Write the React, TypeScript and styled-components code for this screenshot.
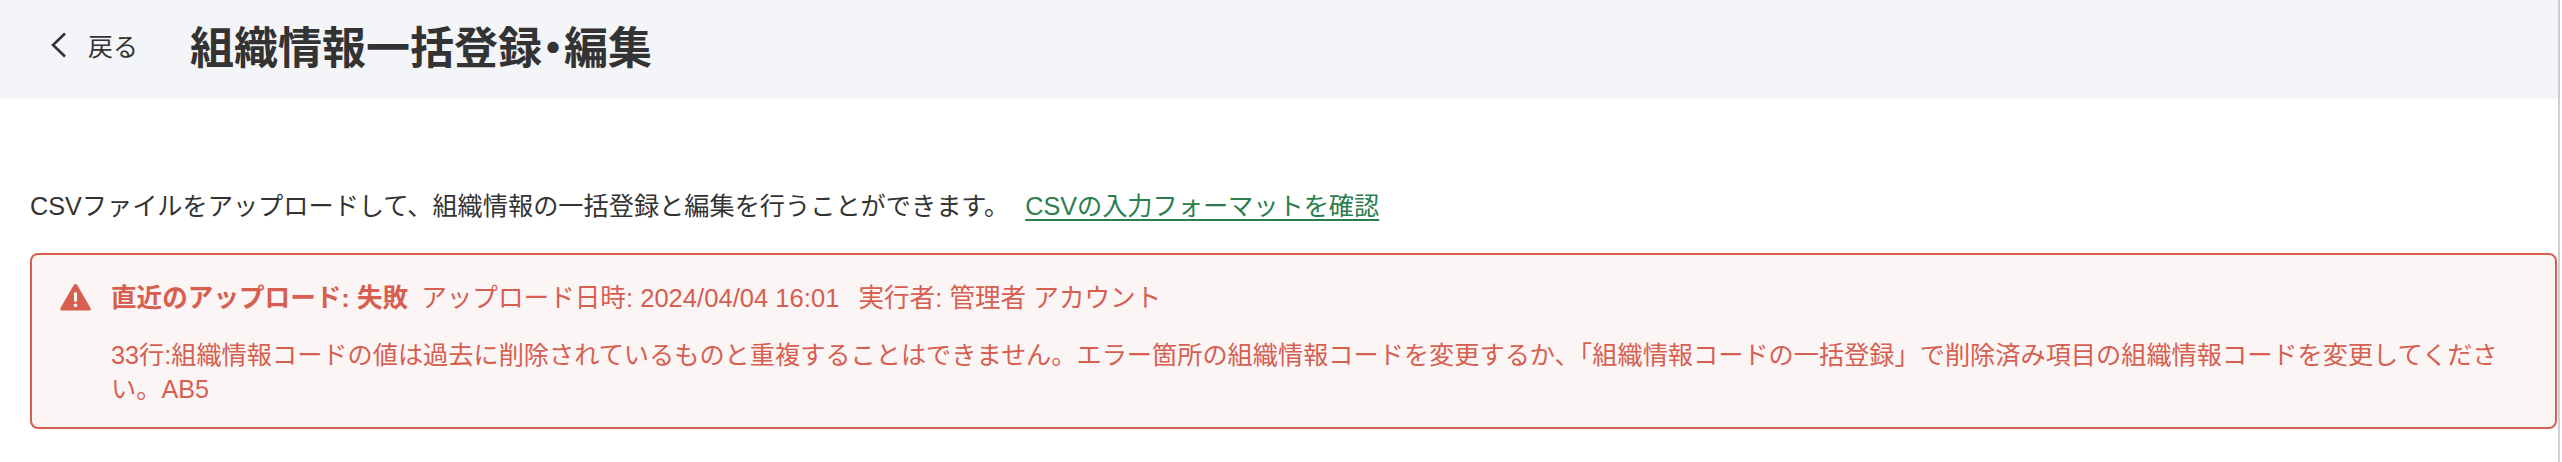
import React from "react";
import styled, { createGlobalStyle } from "styled-components";

const GlobalStyle = createGlobalStyle`
  html, body {
    margin: 0;
    padding: 0;
    background: #ffffff;
    overflow: hidden;
  }
  body {
    font-family: "Liberation Sans", "Noto Sans CJK JP", sans-serif;
    color: #333333;
  }
`;

export default function App() {
  return (
    <>
      <GlobalStyle />
      <Page>
        <Main>
          <Header>
            <BackLink href="#">
              <BackIcon viewBox="0 0 18 26" aria-hidden="true">
                <path d="M15 1.5 L3 13 L15 24.5" />
              </BackIcon>
              戻る
            </BackLink>
            <Title>組織情報一括登録・編集</Title>
          </Header>
          <Content>
            <Intro>
              <span>CSVファイルをアップロードして、組織情報の一括登録と編集を行うことができます。</span>
              <FormatLink href="#">CSVの入力フォーマットを確認</FormatLink>
            </Intro>
            <Alert>
              <AlertIcon viewBox="0 0 32 28" aria-hidden="true">
                <path d="M16 0.5 C16.8 0.5 17.4 0.9 17.8 1.6 L31.6 25.6 C32.3 26.8 31.5 28 30.2 28 L1.8 28 C0.5 28 -0.3 26.8 0.4 25.6 L14.2 1.6 C14.6 0.9 15.2 0.5 16 0.5 Z" fill="#d65f50" />
                <rect x="14.4" y="9" width="3.2" height="10" rx="1.2" fill="#fbf5f5" />
                <circle cx="16" cy="22.6" r="1.9" fill="#fbf5f5" />
              </AlertIcon>
              <AlertBody>
                <AlertHead>
                  <strong>直近のアップロード: 失敗</strong>
                  <UploadDate>アップロード日時: 2024/04/04 16:01</UploadDate>
                  <span>実行者: 管理者 アカウント</span>
                </AlertHead>
                <AlertMessage>
                  33行:組織情報コードの値は過去に削除されているものと重複することはできません。エラー箇所の組織情報コードを変更するか、「組織情報コードの一括登録」で削除済み項目の組織情報コードを変更してください。AB5
                </AlertMessage>
              </AlertBody>
            </Alert>
          </Content>
        </Main>
        <Scrollbar />
      </Page>
    </>
  );
}

const Page = styled.div`
  display: flex;
  width: 2562px;
  height: 462px;
  overflow: hidden;
`;

const Main = styled.main`
  flex: 1;
  min-width: 0;
`;

const Scrollbar = styled.div`
  box-sizing: border-box;
  width: 4px;
  background: #ffffff;
  border-left: 2px solid #cfcfcf;
`;

const Header = styled.header`
  display: flex;
  align-items: center;
  box-sizing: border-box;
  height: 99px;
  padding: 0 0 10px 50px;
  background: #f4f5f8;
`;

const BackLink = styled.a`
  display: flex;
  align-items: center;
  gap: 20px;
  width: 140px;
  color: #333333;
  font-size: 25px;
  text-decoration: none;
`;

const BackIcon = styled.svg`
  width: 18px;
  height: 26px;
  fill: none;
  stroke: #333333;
  stroke-width: 2.6;
`;

const Title = styled.h1`
  margin: 0;
  color: #333333;
  font-size: 44px;
  font-weight: 700;
  font-feature-settings: "palt";
`;

const Content = styled.div`
  padding: 82px 1px 0 30px;
`;

const Intro = styled.p`
  display: flex;
  align-items: center;
  gap: 16px;
  margin: 0 0 26px;
  height: 46px;
  font-size: 25.2px;
`;

const FormatLink = styled.a`
  color: #2b7d4c;
  text-decoration: underline;
  text-underline-offset: 4px;
`;

const Alert = styled.section`
  display: flex;
  gap: 20px;
  box-sizing: border-box;
  height: 176px;
  padding: 25px 40px 0 28px;
  background: #fbf5f6;
  border: 2px solid #d65f50;
  border-radius: 8px;
  color: #d65f50;
`;

const AlertIcon = styled.svg`
  flex: none;
  width: 31px;
  height: 28px;
  margin-top: 3px;
`;

const AlertBody = styled.div`
  flex: 1;
  min-width: 0;
`;

const AlertHead = styled.div`
  display: flex;
  margin-bottom: 22px;
  font-size: 25.6px;
  line-height: 36px;
`;

const UploadDate = styled.span`
  margin: 0 19px 0 13px;
`;

const AlertMessage = styled.p`
  margin: 0;
  font-size: 25.2px;
  line-height: 34px;
`;
